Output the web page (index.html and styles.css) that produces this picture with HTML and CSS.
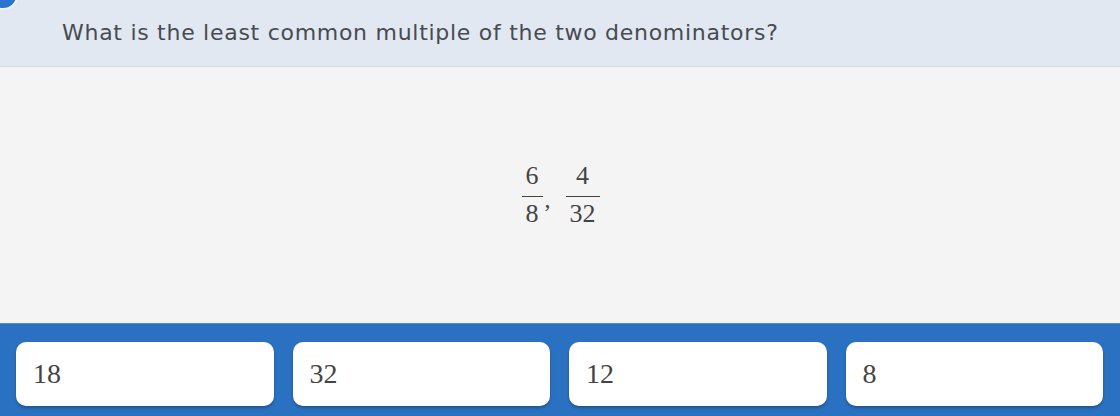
FILE: index.html
```html
<!DOCTYPE html>
<html lang="en">
<head>
    <meta charset="UTF-8">
    <title>Question</title>
    <link rel="stylesheet" href="styles.css">
</head>
<body>
    <div class="corner-dot"></div>
    <div class="question-bar">
        <p class="question">What is the least common multiple of the two denominators?</p>
    </div>
    <div class="stage">
        <div class="expr">
            <span class="frac"><span class="num">6</span><span class="den">8</span></span>
            <span class="comma">,</span>
            <span class="frac"><span class="num">4</span><span class="den">32</span></span>
        </div>
    </div>
    <div class="answers">
        <button class="answer">18</button>
        <button class="answer">32</button>
        <button class="answer">12</button>
        <button class="answer">8</button>
    </div>
</body>
</html>
```

FILE: styles.css
```css
body {
    margin: 0;
    width: 1120px;
    height: 416px;
    overflow: hidden;
    display: flex;
    flex-direction: column;
    position: relative;
    background: #f4f4f4;
}
.corner-dot {
    position: absolute;
    left: -10px;
    top: -16px;
    width: 26px;
    height: 24px;
    border-radius: 50%;
    background: #2a74d0;
    box-shadow: 0 0 0 2px rgba(255, 255, 255, 0.5);
}
.question-bar {
    height: 66px;
    background: #e1e8f2;
    border-bottom: 1px solid #d6dbe1;
    display: flex;
    align-items: center;
    padding-left: 62px;
}
.question {
    margin: 0 0 1px;
    font-family: 'DejaVu Sans', sans-serif;
    font-size: 22px;
    letter-spacing: 0.72px;
    color: #484b50;
}
.stage {
    height: 256px;
    display: flex;
    justify-content: center;
    align-items: center;
}
.expr {
    display: flex;
    align-items: center;
    font-family: 'Liberation Serif', serif;
    font-size: 26px;
    color: #444;
    padding-top: 3px;
}
.frac {
    display: inline-flex;
    flex-direction: column;
    align-items: center;
}
.num {
    padding: 0 5px 6px;
    line-height: 28px;
}
.den {
    border-top: 1px solid #444;
    padding: 0 4px;
    line-height: 34px;
}
.comma {
    margin: 6px 15px 0 1px;
    font-size: 24px;
}
.answers {
    flex: 1;
    background: #2b71c1;
    border-top: 1px solid #4a8ad0;
    display: flex;
    gap: 19px;
    padding: 18px 17px 10px 16px;
}
.answer {
    flex: 1;
    height: 64px;
    border: none;
    border-radius: 10px;
    background: #fff;
    box-shadow: 0 2px 3px rgba(0, 0, 0, 0.25);
    text-align: left;
    padding: 0 17px;
    font-family: 'Liberation Serif', serif;
    font-size: 28px;
    color: #444;
}
```
